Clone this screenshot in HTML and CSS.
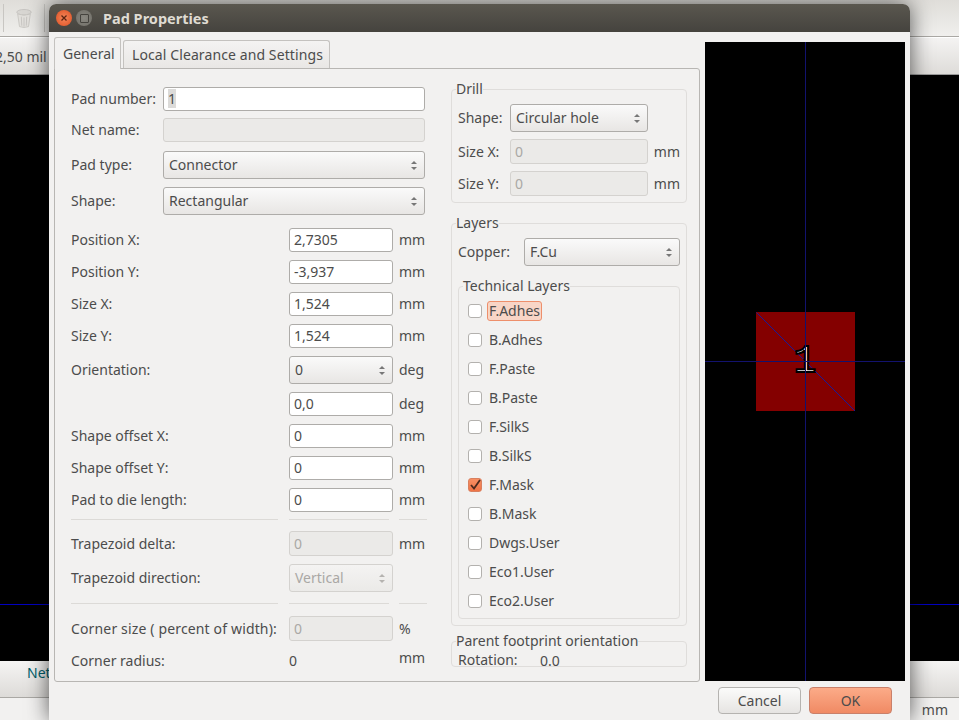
FILE: index.html
```html
<!DOCTYPE html>
<html>
<head>
    <title>Pad Properties</title>
    <meta charset="utf-8" />
    <link rel="stylesheet" href="styles.css">
</head>
<body>
    <div id="app">
        <div class="toolbar">
            <span class="tool-sep"></span>
            <svg class="trash" width="18" height="21" viewBox="0 0 20 22">
                <ellipse cx="10" cy="4" rx="8" ry="3" fill="#d8d6d2" stroke="#c4c2be"/>
                <path d="M3 6 L5 20 Q10 22 15 20 L17 6 Q10 9 3 6 Z" fill="#e2e0dc" stroke="#c8c6c2"/>
                <path d="M7 9 L7.5 19 M10 10 L10 20 M13 9 L12.500 19" stroke="#c4c2be" fill="none"/>
            </svg>
            <span class="tool-sep"></span>
        </div>
        <div class="toolbar2"><span class="grid-size">2,50 mil</span></div>
        <div class="canvas"><div class="canvas-line"></div></div>
        <div class="status">
            <span class="net-label">Net</span>
        </div>
        <div class="status2"><span class="status-unit">mm</span></div>
    </div>

    <div id="dialog">
        <div class="titlebar">
            <span class="win-btn close">
                <svg width="8" height="8" viewBox="0 0 8 8"><path d="M1.500 1.500 L6.500 6.500 M6.500 1.500 L1.500 6.500" stroke="#5c2411" stroke-width="1.300"/></svg>
            </span>
            <span class="win-btn maxi"><span class="maxi-box"></span></span>
            <span class="win-title">Pad Properties</span>
        </div>

        <div class="dialog-main">
            <div class="notebook">
                <div class="tabs">
                    <div class="tab active">General</div>
                    <div class="tab second">Local Clearance and Settings</div>
                </div>
                <div class="panel">
                    <div id="left">
                        <div class="row head"><label>Pad number:</label><div class="entry wide"><span class="sel">1</span></div></div>
                        <div class="row head gap-7"><label>Net name:</label><div class="entry wide off"></div></div>
                        <div class="row head tall gap-9"><label>Pad type:</label><div class="combo wide">Connector<span class="arrows"></span></div></div>
                        <div class="row head tall"><label>Shape:</label><div class="combo wide">Rectangular<span class="arrows"></span></div></div>

                        <div class="row gap-13"><label>Position X:</label><div class="entry num">2,7305</div><span class="unit">mm</span></div>
                        <div class="row"><label>Position Y:</label><div class="entry num">-3,937</div><span class="unit">mm</span></div>
                        <div class="row"><label>Size X:</label><div class="entry num">1,524</div><span class="unit">mm</span></div>
                        <div class="row"><label>Size Y:</label><div class="entry num">1,524</div><span class="unit">mm</span></div>
                        <div class="row tall"><label>Orientation:</label><div class="combo num">0<span class="arrows"></span></div><span class="unit">deg</span></div>
                        <div class="row"><label></label><div class="entry num">0,0</div><span class="unit">deg</span></div>
                        <div class="row"><label>Shape offset X:</label><div class="entry num">0</div><span class="unit">mm</span></div>
                        <div class="row"><label>Shape offset Y:</label><div class="entry num">0</div><span class="unit">mm</span></div>
                        <div class="row"><label>Pad to die length:</label><div class="entry num">0</div><span class="unit">mm</span></div>

                        <div class="sep"><span></span><span></span><span></span></div>
                        <div class="row trap"><label>Trapezoid delta:</label><div class="entry num off">0</div><span class="unit">mm</span></div>
                        <div class="row tall"><label>Trapezoid direction:</label><div class="combo num off">Vertical<span class="arrows"></span></div><span class="unit"></span></div>
                        <div class="sep sep2"><span></span><span></span><span></span></div>
                        <div class="row trap"><label class="long">Corner size ( percent of width):</label><div class="entry num off">0</div><span class="unit">%</span></div>
                        <div class="row radius"><label>Corner radius:</label><div class="value">0</div><span class="unit up">mm</span></div>
                    </div>

                    <div id="right">
                        <fieldset class="group">
                            <legend>Drill</legend>
                            <div class="row drill-row tall"><label>Shape:</label><div class="combo">Circular hole<span class="arrows"></span></div></div>
                            <div class="row drill-row trap"><label>Size X:</label><div class="entry off">0</div><span class="unit">mm</span></div>
                            <div class="row drill-row trap"><label>Size Y:</label><div class="entry off">0</div><span class="unit">mm</span></div>
                        </fieldset>

                        <fieldset class="group layers">
                            <legend>Layers</legend>
                            <div class="row copper tall"><label>Copper:</label><div class="combo">F.Cu<span class="arrows"></span></div></div>
                            <fieldset class="group tech">
                                <legend>Technical Layers</legend>
                                <div class="check"><span class="box"></span><span class="check-label focus">F.Adhes</span></div>
                                <div class="check"><span class="box"></span><span class="check-label">B.Adhes</span></div>
                                <div class="check"><span class="box"></span><span class="check-label">F.Paste</span></div>
                                <div class="check"><span class="box"></span><span class="check-label">B.Paste</span></div>
                                <div class="check"><span class="box"></span><span class="check-label">F.SilkS</span></div>
                                <div class="check"><span class="box"></span><span class="check-label">B.SilkS</span></div>
                                <div class="check">
                                    <span class="box on"><svg width="14" height="14" viewBox="0 0 14 14"><path d="M3 7 L6 10.500 L12 2" stroke="#4a2a1e" stroke-width="1.800" fill="none"/></svg></span>
                                    <span class="check-label">F.Mask</span>
                                </div>
                                <div class="check"><span class="box"></span><span class="check-label">B.Mask</span></div>
                                <div class="check"><span class="box"></span><span class="check-label">Dwgs.User</span></div>
                                <div class="check"><span class="box"></span><span class="check-label">Eco1.User</span></div>
                                <div class="check"><span class="box"></span><span class="check-label">Eco2.User</span></div>
                            </fieldset>
                        </fieldset>

                        <fieldset class="group parent">
                            <legend>Parent footprint orientation</legend>
                            <div class="rotation"><label>Rotation:</label><span>0.0</span></div>
                        </fieldset>
                    </div>
                </div>
            </div>

            <svg class="preview" width="200" height="639" viewBox="0 0 200 639">
                <rect width="200" height="639" fill="#000"/>
                <rect x="51" y="270" width="99" height="99" fill="#840000"/>
                <line x1="51.500" y1="270.500" x2="150" y2="369" stroke="#1a1a9a" stroke-width="1"/>
                <text x="100" y="330" class="pad-num" text-anchor="middle">1</text>
                <line x1="100.500" y1="0" x2="100.500" y2="639" stroke="#12126e"/>
                <line x1="0" y1="319.500" x2="200" y2="319.500" stroke="#12126e"/>
            </svg>
        </div>

        <div class="buttons">
            <div class="btn">Cancel</div>
            <div class="btn ok">OK</div>
        </div>
    </div>
</body>
</html>
```

FILE: styles.css
```css
html, body {
    margin: 0;
    height: 100%;
    overflow: hidden;
}

body {
    font-family: "Noto Sans", "Open Sans", sans-serif;
    font-size: 14px;
    color: #4c4c4c;
    background-color: #f2f1f0;
}

/* application behind the dialog */
#app {
    height: 720px;
    display: flex;
    flex-direction: column;
}

.toolbar {
    height: 36px;
    display: flex;
    align-items: center;
    gap: 11px;
    padding-left: 3px;
    background: linear-gradient(#dfddd9, #f0efed);
    border-bottom: 1px solid #aaa8a4;
}

.tool-sep {
    width: 1px;
    height: 28px;
    background-color: #c8c6c2;
}

.toolbar2 {
    height: 36px;
    display: flex;
    align-items: center;
    background: linear-gradient(#f4f3f2, #dedcd9);
    border-top: 1px solid #fff;
    border-bottom: 1px solid #999;
}

.grid-size {
    margin-left: -5px;
    white-space: nowrap;
}

.canvas {
    height: 586px;
    background-color: #000;
}

.canvas-line {
    height: 1px;
    margin-top: 529px;
    background-color: #0000c0;
}

.status {
    height: 36px;
    background: linear-gradient(#f5f4f3, #dddbd8);
    border-bottom: 1px solid #aaa8a4;
}

.net-label {
    display: block;
    margin: 2px 0 0 27px;
    color: #005f6b;
}

.status2 {
    flex: 1;
    display: flex;
    justify-content: flex-end;
    align-items: center;
    padding-right: 11px;
    background-color: #f2f1f0;
}

/* dialog window */
#dialog {
    position: absolute;
    left: 49px;
    top: 4px;
    width: 861px;
    height: 716px;
    background-color: #f2f1f0;
    border-radius: 7px 7px 0 0;
    box-shadow: 0 0 22px rgba(0, 0, 0, 0.65);
}

.titlebar {
    height: 28px;
    display: flex;
    align-items: center;
    background: linear-gradient(#5a574f, #45433e);
    border-radius: 7px 7px 0 0;
}

.win-btn {
    width: 16px;
    height: 16px;
    border-radius: 50%;
    display: flex;
    align-items: center;
    justify-content: center;
}

.close {
    margin-left: 7px;
    background: radial-gradient(#f4875a, #de4f22);
}

.maxi {
    margin-left: 4px;
    background: radial-gradient(#8a8881, #6f6d66);
}

.maxi-box {
    width: 7px;
    height: 7px;
    border: 1px solid #45433e;
    border-radius: 1px;
}

.win-title {
    margin-left: 11px;
    font-size: 14.500px;
    font-weight: bold;
    color: #dfdbd2;
}

.dialog-main {
    display: flex;
    gap: 5px;
    padding-left: 5px;
    height: 649px;
}

.notebook {
    width: 646px;
    padding-top: 4px;
}

.tabs {
    display: flex;
    align-items: flex-end;
    gap: 2px;
    height: 32px;
}

.tab {
    box-sizing: border-box;
    height: 28px;
    line-height: 28px;
    padding: 0 8px;
    border: 1px solid #c4c2bf;
    border-bottom: 0;
    border-radius: 3px 3px 0 0;
    background: linear-gradient(#f4f3f2, #e9e7e5);
    white-space: nowrap;
}

.tab.active {
    width: 67px;
    height: 32px;
    line-height: 32px;
    position: relative;
    z-index: 1;
    margin-bottom: -1px;
    background: #f2f1f0;
}

.tab.second {
    width: 207px;
    letter-spacing: 0.100px;
}

.panel {
    height: 612px;
    display: flex;
    border: 1px solid #b8b6b3;
    border-radius: 0 3px 3px 3px;
}

#left {
    width: 356px;
    margin-left: 16px;
    padding-top: 18px;
    display: flex;
    flex-direction: column;
    gap: 8px;
}

#right {
    width: 236px;
    margin-left: 24px;
    padding-top: 12px;
}

.row {
    display: flex;
    align-items: center;
    height: 24px;
    flex-shrink: 0;
}

.row.tall {
    height: 28px;
}

.row label {
    width: 218px;
    flex-shrink: 0;
    padding-bottom: 2px;
    white-space: nowrap;
}

.row label.long {
    letter-spacing: 0.150px;
}

.row.head label {
    width: 92px;
}

.gap-7 {
    margin-top: -1px;
}

.gap-9 {
    margin-top: 1px;
}

.gap-13 {
    margin-top: 5px;
}

.radius {
    margin-top: 3px;
    height: 18px;
}

.entry, .combo {
    box-sizing: border-box;
    border: 1px solid #aeaca9;
    border-radius: 3px;
    display: flex;
    align-items: center;
    white-space: nowrap;
}

.entry {
    height: 100%;
    background-color: #fff;
    padding: 0 4px 2px;
}

.combo {
    height: 100%;
    padding: 0 5px 2px;
    justify-content: space-between;
    background: linear-gradient(#fafafa, #e8e6e4);
}

.wide {
    width: 262px;
}

.num {
    width: 104px;
}

.off {
    background: #ebeae8;
    border-color: #d4d2cf;
    color: #aaa8a5;
}

.combo.off {
    background: linear-gradient(#f4f3f2, #ebeae8);
}

.sel {
    background-color: #dcdbd9;
}

.arrows {
    display: flex;
    flex-direction: column;
    gap: 3px;
    margin: 2px 2px 0 0;
    color: #777;
}

.off .arrows {
    color: #b5b3b0;
}

.arrows::before, .arrows::after {
    content: "";
    width: 0;
    height: 0;
    border-left: 3px solid transparent;
    border-right: 3px solid transparent;
}

.arrows::before {
    border-bottom: 3px solid currentColor;
}

.arrows::after {
    border-top: 3px solid currentColor;
}

.unit {
    margin-left: 6px;
    padding-bottom: 2px;
}

.unit.up {
    margin-top: -6px;
}

.value {
    width: 104px;
    padding-bottom: 2px;
}

/* 25px rows sit a pixel differently */
.row.trap {
    height: 25px;
}

.row.trap label, .row.trap .entry, .row.trap .unit {
    padding-bottom: 1px;
}

.sep {
    display: flex;
    margin: -1px 0 3px;
    height: 1px;
}

.sep2 {
    margin: 3px 0 4px;
}

.sep span {
    height: 1px;
    background-color: #dcdad7;
    width: 207px;
}

.sep span:nth-child(2) {
    width: 100px;
    margin-left: 11px;
}

.sep span:nth-child(3) {
    width: 28px;
    margin-left: 10px;
}

/* group boxes */
.group {
    margin: 0;
    padding: 7px 6px 6px;
    min-width: 0;
    border: 1px solid #dfdddb;
    border-radius: 4px;
}

.group legend {
    margin-left: -2px;
    padding: 0;
    line-height: 16px;
    white-space: nowrap;
}

.drill-row {
    margin-bottom: 7px;
}

.drill-row:last-child {
    margin-bottom: 0;
}

.row.drill-row label {
    width: 52px;
}

.drill-row .combo, .drill-row .entry {
    width: 138px;
}

.layers {
    margin-top: 12px;
    height: 411px;
    box-sizing: border-box;
}

.row.copper label {
    width: 66px;
}

.copper .combo {
    width: 156px;
}

.tech {
    margin-top: 12px;
    padding: 2px 9px 0;
    height: 341px;
    box-sizing: border-box;
}

.tech legend {
    margin-left: -5px;
}

.check {
    height: 29px;
    display: flex;
    align-items: center;
}

.box {
    box-sizing: border-box;
    width: 14px;
    height: 14px;
    border: 1px solid #b3b1ae;
    border-radius: 3px;
    background-color: #fff;
    flex-shrink: 0;
}

.box.on {
    background: linear-gradient(#f78f63, #ef7446);
    border-color: #d9805f;
}

.box.on svg {
    display: block;
    margin: -1px;
}

.check-label {
    margin-left: 7px;
    padding: 0;
}

.check-label.focus {
    margin-left: 5px;
    padding: 0 1px;
    border: 1px solid #ee8f6b;
    border-radius: 3px;
    background-color: #f8d5c6;
    line-height: 18px;
}

.parent {
    margin-top: 7px;
    padding: 0 6px;
    height: 34px;
    box-sizing: border-box;
    overflow: hidden;
}

.rotation {
    display: flex;
    height: 17px;
    line-height: 24px;
}

.rotation label {
    width: 82px;
    line-height: 21px;
}

/* preview */
.preview {
    display: block;
    margin-top: 10px;
}

.pad-num {
    font-family: "Liberation Mono", monospace;
    font-size: 38px;
    fill: #fff;
    stroke: #000;
    stroke-width: 2px;
}

/* buttons */
.buttons {
    display: flex;
    justify-content: flex-end;
    gap: 8px;
    padding: 6px 18px 0 0;
}

.btn {
    box-sizing: border-box;
    width: 83px;
    height: 27px;
    line-height: 25px;
    text-align: center;
    border: 1px solid #b5b3b0;
    border-radius: 4px;
    background: linear-gradient(#fbfbfa, #e6e4e2);
}

.btn.ok {
    border-color: #c9806a;
    background: linear-gradient(#fcab88, #f08a64);
}
```
